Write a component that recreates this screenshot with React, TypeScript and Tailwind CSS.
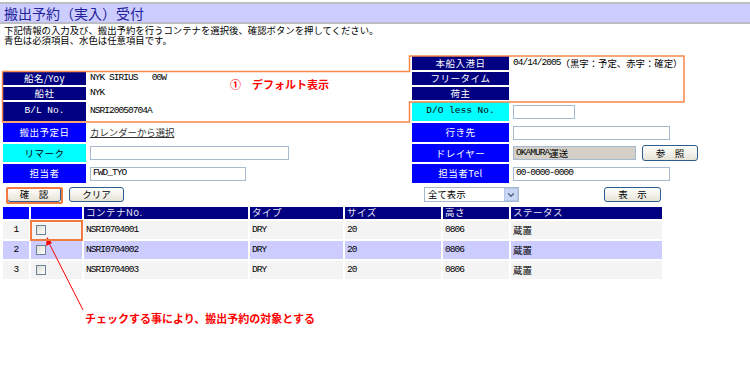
import { ChevronDown } from "lucide-react";

const jp = "font-['Noto_Sans_CJK_JP',sans-serif]";
const mono = "font-['Liberation_Mono','Noto_Sans_CJK_JP',monospace] text-[9.5px] tracking-[-0.95px]";

function Label({ text, tone, dark }: { text: string; tone: "navy" | "blue" | "cyan"; dark?: boolean }) {
  const bg = tone === "navy" ? "bg-[#000080]" : tone === "blue" ? "bg-[#0000ff]" : "bg-[#00ffff]";
  return (
    <div
      className={`${bg} flex items-center justify-center text-[9.5px] tracking-[0.5px] ${dark ? "text-black" : "text-white"}`}
    >
      {text}
    </div>
  );
}

function Btn({ label, className = "" }: { label: string; className?: string }) {
  return (
    <div
      className={`h-[15px] flex items-center justify-center rounded-[3px] border border-[#2b5d8e] bg-gradient-to-b from-white to-[#e6e3d6] text-[9.5px] text-black ${className}`}
    >
      {label}
    </div>
  );
}

function TextBox({ className = "", children }: { className?: string; children?: React.ReactNode }) {
  return (
    <div className={`h-[14px] border border-[#a5b9cf] bg-white flex items-center pl-[2px] ${className}`}>{children}</div>
  );
}

const rows = ["NSRI0704001", "NSRI0704002", "NSRI0704003"];

export default function App() {
  return (
    <div className={`relative w-[750px] h-[369px] bg-white overflow-hidden ${jp} text-black`}>
      {/* title */}
      <div className="mt-[2px] h-[22px] border-t-2 border-b-2 border-[#bdbdc6] bg-[#ccccff] flex items-center pl-[4px]">
        <span className="text-[14px] leading-none text-[#22229c]">搬出予約（実入）受付</span>
      </div>
      <div className="pl-[4px] pt-[1px] h-[32px] text-[9.4px] leading-[10px]">
        <p>下記情報の入力及び、搬出予約を行うコンテナを選択後、確認ボタンを押してください。</p>
        <p>青色は必須項目、水色は任意項目です。</p>
      </div>

      {/* form */}
      <div className="ml-[3px] grid grid-cols-[83px_322px_97px_190px] grid-rows-[14px_13px_13px_19px_19px_18px_19px] gap-[2px]">
        <div />
        <div />
        <Label text="本船入港日" tone="navy" />
        <div className="flex items-center pl-[2px]">
          <span className={mono}>04/14/2005</span>
          <span className="text-[9.4px]">（黒字：予定、赤字：確定）</span>
        </div>

        <Label text="船名/Yoy" tone="navy" />
        <div className="flex items-center pl-[2px]">
          <span className={`${mono} whitespace-pre`}>NYK SIRIUS   00W</span>
        </div>
        <Label text="フリータイム" tone="navy" />
        <div />

        <Label text="船社" tone="navy" />
        <div className="flex items-center pl-[2px]">
          <span className={mono}>NYK</span>
        </div>
        <Label text="荷主" tone="navy" />
        <div />

        <div className={`bg-[#000080] flex items-center justify-center text-white ${mono} tracking-[0px]`}>B/L No.</div>
        <div className="flex items-center pl-[2px]">
          <span className={mono}>NSRI20050704A</span>
        </div>
        <div className={`bg-[#00ffff] flex items-center justify-center ${mono} tracking-[0px]`}>D/O less No.</div>
        <div className="flex items-center pl-[2px]">
          <TextBox className="w-[62px]" />
        </div>

        <Label text="搬出予定日" tone="blue" />
        <div className="flex items-center pl-[2px]">
          <span className="text-[9.4px] underline text-[#333]">カレンダーから選択</span>
        </div>
        <Label text="行き先" tone="blue" />
        <div className="flex items-center pl-[2px]">
          <TextBox className="w-[157px]" />
        </div>

        <Label text="リマーク" tone="cyan" dark />
        <div className="flex items-center pl-[2px]">
          <TextBox className="w-[199px]" />
        </div>
        <Label text="ドレイヤー" tone="blue" />
        <div className="flex items-center pl-[2px] gap-[6px]">
          <div className="h-[14px] w-[123px] border border-[#a5b9cf] bg-[#d4d0c8] flex items-center pl-[2px]">
            <span className={mono}>OKAMURA</span>
            <span className="text-[9.4px]">運送</span>
          </div>
          <Btn label="参　照" className="w-[56px] h-[16px]" />
        </div>

        <Label text="担当者" tone="blue" />
        <div className="flex items-center pl-[2px]">
          <TextBox className="w-[156px]">
            <span className={mono}>FWD_TYO</span>
          </TextBox>
        </div>
        <Label text="担当者Tel" tone="blue" />
        <div className="flex items-center pl-[2px]">
          <TextBox className="w-[157px]">
            <span className={mono}>00-0000-0000</span>
          </TextBox>
        </div>
      </div>

      {/* buttons */}
      <div className="mt-[4px] flex items-center pl-[7px] h-[15px]">
        <Btn label="確　認" className="w-[54px]" />
        <Btn label="クリア" className="ml-[8px] w-[55px]" />
        <div className="ml-[300px] w-[95px] h-[15px] border border-[#a5b9cf] bg-white flex items-center">
          <span className="pl-[3px] text-[9.4px] flex-1">全て表示</span>
          <div className="w-[14px] h-[13px] bg-[#c9d7f5] border border-[#b6c7ec] flex items-center justify-center">
            <ChevronDown size={10} strokeWidth={3} className="text-[#4d6185]" />
          </div>
        </div>
        <Btn label="表　示" className="ml-[85px] w-[57px]" />
      </div>

      {/* table */}
      <div className="mt-[5px] ml-[3px] grid grid-cols-[26px_51px_164px_93px_96px_66px_151px] grid-rows-[12px_18px_18px_18px] gap-[2px] text-[9.5px]">
        <div className="bg-[#0000ff]" />
        <div className="bg-[#0000ff]" />
        {["コンテナNo.", "タイプ", "サイズ", "高さ", "ステータス"].map((h) => (
          <div key={h} className="bg-[#000080] text-[#e8e8f4] flex items-center pl-[2px] leading-none tracking-[0.5px]">
            {h}
          </div>
        ))}
        {rows.map((no, i) => {
          const bg = i === 1 ? "bg-[#ccccff]" : "bg-[#f4f4f4]";
          return [
            <div key={`n${i}`} className={`${bg} flex items-center justify-center`}>
              <span className={mono}>{i + 1}</span>
            </div>,
            <div key={`c${i}`} className={`${bg} flex items-center pl-[5px]`}>
              <div className="w-[10px] h-[10px] border border-[#6d8199] bg-gradient-to-br from-[#dcdcd6] to-white" />
            </div>,
            <div key={`a${i}`} className={`${bg} flex items-center pl-[2px]`}>
              <span className={mono}>{no}</span>
            </div>,
            <div key={`b${i}`} className={`${bg} flex items-center pl-[2px]`}>
              <span className={mono}>DRY</span>
            </div>,
            <div key={`s${i}`} className={`${bg} flex items-center pl-[2px]`}>
              <span className={mono}>20</span>
            </div>,
            <div key={`h${i}`} className={`${bg} flex items-center pl-[2px]`}>
              <span className={mono}>0806</span>
            </div>,
            <div key={`t${i}`} className={`${bg} flex items-center pl-[2px]`}>
              蔵置
            </div>,
          ];
        })}
      </div>

      {/* annotations */}
      <svg className="absolute inset-0 pointer-events-none" width="750" height="369">
        <polyline
          points="2.5,71.5 409.5,71.5 409.5,56 684,56 684,102 409.5,102 409.5,122 2.5,122 2.5,71.5"
          fill="none"
          stroke="#f5874a"
          strokeWidth="1.5"
        />
        <line x1="83" y1="310" x2="49" y2="243" stroke="#ff0000" strokeWidth="1" />
        <polygon points="47,237 46,246 52,243" fill="#ff0000" />
      </svg>
      <div className="absolute left-[6px] top-[187px] w-[57px] h-[17px] border-2 border-[#f07a40] rounded-[2px]" />
      <div className="absolute left-[30px] top-[220px] w-[53px] h-[21px] border-2 border-[#f07a40]" />
      <div className="absolute left-[230px] top-[79px] text-[11px] font-bold text-[#ff0000] whitespace-pre leading-none">
        ①　デフォルト表示
      </div>
      <div className="absolute left-[85px] top-[313px] text-[11px] font-bold text-[#ff0000] leading-none">
        チェックする事により、搬出予約の対象とする
      </div>
    </div>
  );
}
